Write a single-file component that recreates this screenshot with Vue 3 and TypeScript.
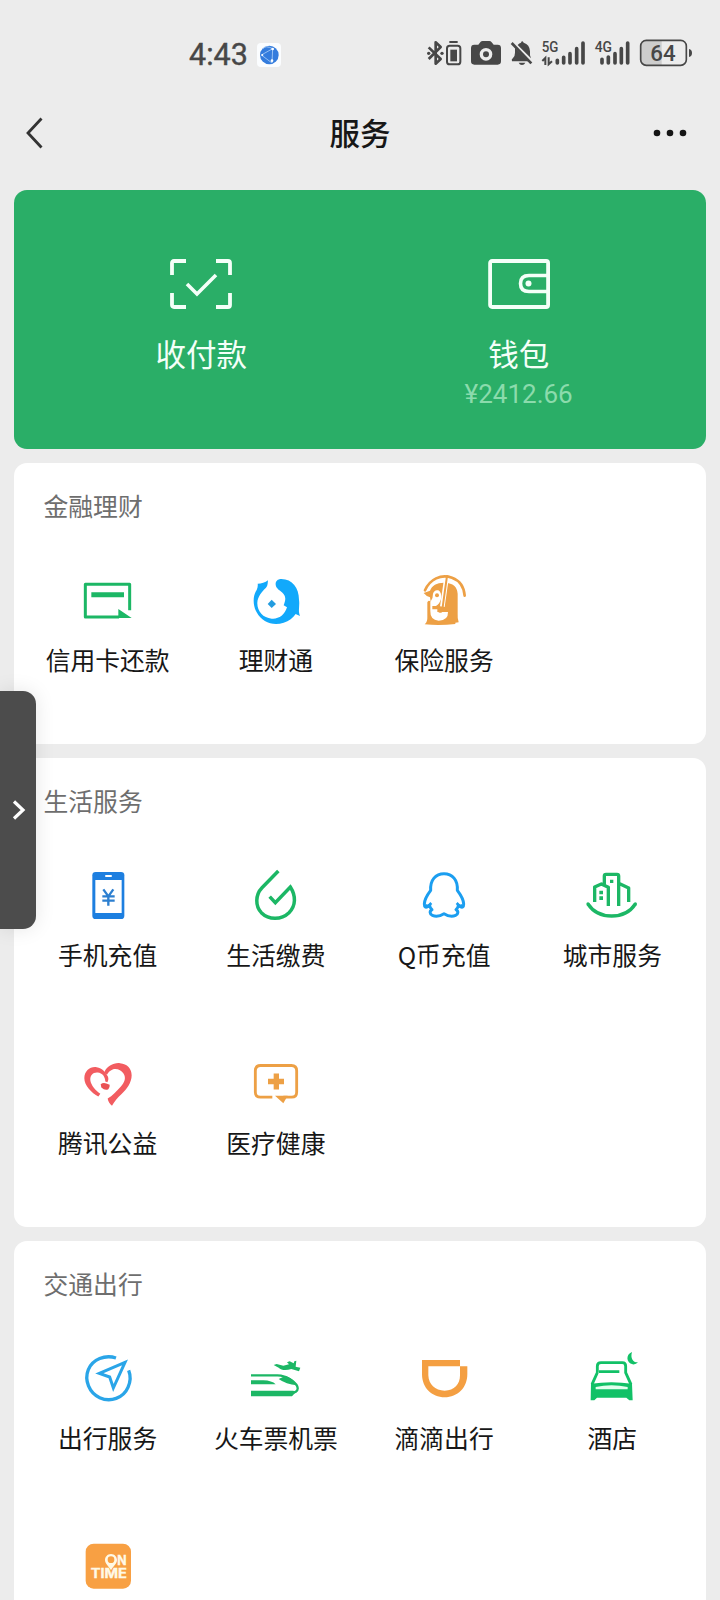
<script setup lang="ts">
interface Service {
  label: string
  viewBox: string
  art: string
}

interface Section {
  title: string
  items: Service[]
}

const green = '#1cb765'
const blue = '#1b9ef0'
const orange = '#eda045'

const sections: Section[] = [
  {
    title: '金融理财',
    items: [
      {
        label: '信用卡还款',
        viewBox: '38 48 150 150',
        art: `<path d="M178 151V73H45V171H146" fill="none" stroke="${green}" stroke-width="9" stroke-linejoin="round"/>
          <path d="M63 97H161V112H63ZM144 147L184 174H144Z" fill="${green}"/>`,
      },
      {
        label: '理财通',
        viewBox: '543 48 150 150',
        art: `<path d="M594 61C586 68 574 71 563 71C564 78 563 84 560 90C548 107 548 137 560 157C576 187 610 199 641 188C657 183 669 174 677 162L690 168C683 150 690 139 687 119C687 84 667 57 634 57C622 57 616 65 617 74C618 87 632 91 640 101C650 113 645 125 641 136L651 142C644 165 626 178 605 176C579 174 561 154 562 128C563 110 575 95 588 83C594 77 593 68 594 61Z" fill="#12a9fb"/>
          <path d="M605 119L618 132L605 144L593 132Z" fill="#239cdf"/>`,
      },
      {
        label: '保险服务',
        viewBox: '1047 48 150 150',
        art: `<path d="M1065 91C1079 58 1113 41 1146 53C1168 61 1182 80 1184 107" fill="none" stroke="${orange}" stroke-width="8" stroke-linecap="round"/>
          <path d="M1061 99L1080 92C1086 75 1102 67 1125 68Q1161 70 1163 101V160Q1162 177 1166 187L1156 188V192Q1110 197 1064 193Q1073 186 1072 170V127Q1075 119 1082 125L1080 112Q1070 110 1061 99Z" fill="${orange}"/>
          <path d="M1089 101Q1093 88 1105 91Q1116 97 1113 117Q1109 132 1098 138H1087V148H1102V156H1134Q1135 181 1106 182Q1080 180 1081 153V126Q1090 114 1089 101Z" fill="#fff"/>
          <circle cx="1101" cy="106" r="6" fill="${orange}"/>
          <path d="M1129 57L1117 140" fill="none" stroke="#fff" stroke-width="14"/>
          <path d="M1131 48L1117 149Q1115 158 1107 154" fill="none" stroke="${orange}" stroke-width="6" stroke-linecap="round"/>`,
      },
    ],
  },
  {
    title: '生活服务',
    items: [
      {
        label: '手机充值',
        viewBox: '38 33 150 150',
        art: `<rect x="66" y="36" width="96" height="141" rx="10" fill="#1d7fe0"/>
          <path d="M75 60H154V159H75Z" fill="#fff"/><path d="M107 48H122" stroke="#fff" stroke-width="6" stroke-linecap="round"/>
          <path d="M99 88L114 109L129 88M96 109H133M96 122H133M114 109V137" fill="none" stroke="#2c7fd0" stroke-width="7"/>`,
      },
      {
        label: '生活缴费',
        viewBox: '543 33 150 150',
        art: `<path d="M625 33L576 83C555 105 556 139 574 158C597 181 634 180 657 158C678 137 678 107 661 81L616 128L599 110" fill="none" stroke="${green}" stroke-width="10.5"/>`,
      },
      {
        label: 'Q币充值',
        viewBox: '57 33 150 150',
        art: `<path d="M92 91C90 60 107 41 132 41S174 60 172 91C181 103 191 120 191 132C191 142 187 144 180 139L175 136C175 141 173 145 168 149C176 153 175 163 167 166C155 171 143 168 132 161C121 168 109 171 97 166C89 163 88 153 96 149C91 145 89 141 89 136L84 139C77 144 73 142 73 132C73 120 83 103 92 91Z" fill="none" stroke="${blue}" stroke-width="9" stroke-linejoin="round"/>
          <path d="M94 129L84 139L76 136M170 129L180 139L188 136" fill="none" stroke="${blue}" stroke-width="8"/>`,
      },
      {
        label: '城市服务',
        viewBox: '562 33 150 150',
        art: `<path d="M565 132C596 180 676 180 707 132M585 126V81L605 72L626 82V138M614 75V48Q614 43 619 43H652Q657 43 657 48V138M660 71L687 84V126" fill="none" stroke="${green}" stroke-width="10" stroke-linejoin="round"/>
          <circle cx="565" cy="132" r="5" fill="${green}"/><circle cx="707" cy="132" r="5" fill="${green}"/>
          <path d="M631 59H641V69H631ZM599 92H610V103H599ZM599 109H610V120H599Z" fill="${green}"/>`,
      },
      {
        label: '腾讯公益',
        viewBox: '38 28.5 150 150',
        art: `<path d="M84 141C64 130 42 108 42 86C42 64 60 50 79 53C96 55 107 69 113 82C115 88 114 94 111 98L105 96C105 82 96 70 82 69C67 68 59 78 60 92C62 108 76 122 90 133Z" fill="#f25c60"/>
          <path d="M102 68C110 50 130 39 149 41C171 43 184 57 184 77C184 99 169 119 153 134C142 144 133 154 125 169C118 164 113 154 112 147C126 140 139 125 151 112C164 98 167 84 160 73C153 62 139 56 127 60C119 63 114 68 110 76Z" fill="#f25c60"/>
          <path d="M91 104Q99 98 108 102L118 106Q119 114 114 119Q104 124 93 114Z" fill="#e95254"/>`,
      },
      {
        label: '医疗健康',
        viewBox: '543 28.5 150 150',
        art: `<path d="M607 143H571Q556 143 556 128V64Q556 48 572 48H664Q680 48 680 64V128Q680 143 665 143H640" fill="none" stroke="${orange}" stroke-width="8.5"/>
          <path d="M611 72H627V88H642V104H627V120H611V104H594V88H611ZM615 139H653L640 161Z" fill="${orange}"/>`,
      },
    ],
  },
  {
    title: '交通出行',
    items: [
      {
        label: '出行服务',
        viewBox: '38 41 150 150',
        art: `<path d="M137 53C104 42 67 57 54 88C41 120 57 158 88 172C121 187 159 173 173 141C181 123 181 105 175 90" fill="none" stroke="#2aa5e8" stroke-width="10"/>
          <path d="M164 66L87 99L118 110L129 143Z" fill="none" stroke="#2aa5e8" stroke-width="9"/>`,
      },
      {
        label: '火车票机票',
        viewBox: '543 41 150 150',
        art: `<path d="M543 105H622C652 105 682 129 683 143C684 153 674 158 662 158H543" fill="none" stroke="${green}" stroke-width="7"/>
          <path d="M543 151H670L677 156L666 168H543ZM543 120H580Q606 121 617 132H543ZM626 116L647 106Q673 117 681 135Q648 132 626 116Z" fill="${green}"/>
          <path d="M611 74L620 71L640 76L657 72L651 66L659 63L671 69L673 63L679 61L677 79L691 82L687 93L664 86C648 91 634 90 626 82Z" fill="${green}"/>`,
      },
      {
        label: '滴滴出行',
        viewBox: '57 41 150 150',
        art: `<path d="M66 59H180V78H202V102C202 142 173 171 134 171S66 142 66 102ZM85 78V105C86 132 105 151 134 151S180 132 180 105V78Z" fill="#f49f42" fill-rule="evenodd"/>`,
      },
      {
        label: '酒店',
        viewBox: '562 41 150 150',
        art: `<path d="M593 97V78Q593 67 604 67H668Q678 67 678 78V97L694 132M593 97L577 132M598 94H659" fill="none" stroke="#12c167" stroke-width="8.5"/>
          <path d="M574 130Q635 121 697 130L699 180H689L680 172H592L584 180H573Z" fill="#12c167"/>
          <path d="M588 147V140Q635 130 684 140V147Z" fill="#e3ffee"/>
          <path d="M697 35C677 42 680 69 699 72Q709 73 715 66C701 67 691 55 697 35Z" fill="#12c167"/>`,
      },
      {
        label: '',
        viewBox: '248 68 150 150',
        art: `<rect x="256" y="70" width="136" height="135" rx="24" fill="#f8a043"/>
          <g fill="#fff9e6" stroke="#fff9e6" stroke-width="1" font-family="Inter, 'Open Sans', sans-serif" font-weight="700" font-size="39">
          <text x="351" y="134" textLength="28" lengthAdjust="spacingAndGlyphs">N</text><text x="271" y="174" textLength="109" lengthAdjust="spacingAndGlyphs">TIME</text></g>
          <path d="M332 101C321 101 314 110 314 119C314 131 327 139 332 150C337 139 350 131 350 119C350 110 343 101 332 101ZM332 108A10 10 0 1 1 332 128A10 10 0 1 1 332 108Z" fill="#fff9e6" fill-rule="evenodd"/>`,
      },
    ],
  },
]
</script>

<template>
  <div class="screen">
    <header class="status">
      <span class="time">4:43</span>
      <svg class="app-badge" viewBox="0 0 72 72">
        <rect width="72" height="72" rx="12" fill="#fbfdff" />
        <circle cx="37" cy="36" r="28" fill="#347cdd" />
        <path d="M13 36L47 17L45 60ZM47 17Q25 6 18 17" fill="none" stroke="#a9cef8" stroke-width="2.5" />
        <circle cx="47" cy="18" r="4" fill="#fff" /><circle cx="45" cy="53" r="4" fill="#fff" /><circle cx="16" cy="36" r="3" fill="#fff" />
      </svg>
      <svg class="indicators" viewBox="0 0 870 150">
        <g fill="none" stroke="#474747" stroke-width="8">
          <path d="M41 52L77 87L62 101V37L77 51L41 87" stroke-linejoin="round" />
          <rect x="96" y="47" width="40" height="56" rx="8" stroke-width="6" />
          <path d="M103 36H128" stroke-width="6" />
        </g>
        <g fill="#474747">
          <circle cx="41" cy="70" r="5" /><circle cx="81" cy="70" r="5" />
          <path d="M106 59H126V94H106Z" />
          <path d="M178 44H190L197 35Q199 33 203 33H223Q227 33 230 37L236 44H248Q258 44 258 54V94Q258 104 248 104H178Q168 104 168 94V54Q168 44 178 44ZM213 54A19 19 0 1 0 213 92A19 19 0 1 0 213 54Z" fill-rule="evenodd" />
          <circle cx="213" cy="73" r="9" />
          <path d="M300 53L340 94H291Q288 88 294 84Q300 78 300 68ZM308 45Q313 39 318 38Q321 30 326 38Q344 43 345 64V76L348 85ZM311 98H331Q328 105 321 105T311 98Z" />
          <path d="M822 57Q831 59 831 69T822 81Z" />
        </g>
        <path d="M290 39L349 100" stroke="#474747" stroke-width="8" />
        <g stroke="#474747" stroke-width="11" stroke-linecap="round">
          <path d="M427 91V99M446 82V99M465 71V99M485 56V99M504 39V99" />
          <path d="M561 88V99M580 81V99M600 71V99M619 56V99M638 39V99" />
        </g>
        <path d="M382 93L391 84V105M401 82V103L411 94" fill="none" stroke="#474747" stroke-width="6" />
        <path d="M691 31H740V107H691Q677 107 677 91V47Q677 31 691 31Z" fill="#cdcdcd" />
        <rect x="677" y="31" width="137" height="75" rx="17" fill="none" stroke="#474747" stroke-width="5" />
        <g class="indicator-text">
          <text x="380" y="67" font-size="45" textLength="50" lengthAdjust="spacingAndGlyphs">5G</text>
          <text x="539" y="67" font-size="45" textLength="52" lengthAdjust="spacingAndGlyphs">4G</text>
          <text x="706" y="93" font-size="66" textLength="76" lengthAdjust="spacingAndGlyphs">64</text>
        </g>
      </svg>
    </header>

    <nav class="navbar">
      <svg class="back" viewBox="0 0 18 34"><path d="M16.5 2.5L3 17L16.5 31.5" fill="none" stroke="#333" stroke-width="2.8" /></svg>
      <h1>服务</h1>
      <svg class="more" viewBox="0 0 34 8"><g fill="#151515"><circle cx="4" cy="4" r="3.3" /><circle cx="17" cy="4" r="3.3" /><circle cx="30" cy="4" r="3.3" /></g></svg>
    </nav>

    <main class="content">
      <section class="hero">
        <div class="hero-item">
          <svg viewBox="0 0 64 52">
            <path d="M3 17V5Q3 3 5 3H17M47 3H59Q61 3 61 5V17M61 35V47Q61 49 59 49H47M17 49H5Q3 49 3 47V35" fill="none" stroke="#f4fff8" stroke-width="3.8" />
            <path d="M18 26L28 36L47 17" fill="none" stroke="#f4fff8" stroke-width="3.6" />
          </svg>
          <span class="hero-label">收付款</span>
        </div>
        <div class="hero-item">
          <svg viewBox="0 0 64 52">
            <rect x="3.1" y="3" width="58" height="46" rx="2" fill="none" stroke="#f4fff8" stroke-width="3.8" />
            <path d="M61 17.5H42Q33.5 17.5 33.5 25.5T42 33.5H61" fill="none" stroke="#f4fff8" stroke-width="3.6" />
            <circle cx="41.5" cy="25.5" r="3" fill="#f4fff8" />
          </svg>
          <span class="hero-label">钱包</span>
          <span class="balance">¥2412.66</span>
        </div>
      </section>

      <section v-for="section in sections" :key="section.title" class="card">
        <h2>{{ section.title }}</h2>
        <div class="grid">
          <div v-for="item in section.items" :key="item.label" class="service">
            <svg :viewBox="item.viewBox"><g v-html="item.art"></g></svg>
            <span>{{ item.label }}</span>
          </div>
        </div>
      </section>
    </main>

    <aside class="drawer">
      <svg viewBox="0 0 14 22"><path d="M2 2.5L11 11L2 19.5" fill="none" stroke="#fff" stroke-width="3.2" /></svg>
    </aside>
  </div>
</template>

<style>
body {
  margin: 0;
  background: #ececec;
}
</style>

<style scoped>
.screen {
  position: relative;
  box-sizing: border-box;
  width: 720px;
  height: 1600px;
  overflow: hidden;
  background: #ececec;
  color: #171717;
  font-family: 'Noto Sans CJK SC', 'Noto Sans', sans-serif;
}

.screen svg {
  display: block;
  flex: none;
  overflow: visible;
}

.status {
  display: flex;
  align-items: center;
  box-sizing: border-box;
  height: 100px;
  padding: 9px 15px 0 189px;
}

.time {
  width: 68px;
  color: #474747;
  font: 400 30.5px/36px Roboto, sans-serif;
  -webkit-text-stroke: 0.4px #474747;
}

.app-badge {
  width: 24px;
  height: 24px;
}

.indicators {
  width: 290px;
  height: 50px;
  margin-left: auto;
}

.indicator-text {
  fill: #474747;
  font-family: Roboto, sans-serif;
  font-weight: 500;
}

.navbar {
  display: grid;
  grid-template-columns: 1fr auto 1fr;
  align-items: center;
  height: 66px;
  padding: 0 33px 0 25px;
}

.back {
  width: 18px;
  height: 34px;
}

.navbar h1 {
  margin: 0 0 2px 8px;
  font-size: 30.5px;
  font-weight: 500;
  line-height: 44px;
}

.more {
  width: 34px;
  height: 8px;
  justify-self: end;
}

.content {
  display: flex;
  flex-direction: column;
  gap: 14px;
  padding: 24px 14px 0;
}

.hero {
  display: grid;
  grid-template-columns: 1fr 1fr;
  box-sizing: border-box;
  height: 259px;
  padding: 68px 28.7px 0;
  border-radius: 13px;
  background: #2aae67;
}

.hero-item {
  display: flex;
  flex-direction: column;
  align-items: center;
}

.hero-item svg {
  width: 64px;
  height: 52px;
}

.hero-label {
  margin-top: 21px;
  color: #f4fff8;
  font-size: 30.5px;
  line-height: 44px;
}

.balance {
  margin-top: 2px;
  color: #8bdbac;
  font: 400 26px/34px Roboto, sans-serif;
}

.card {
  flex: none;
  border-radius: 13px;
  background: #fff;
}

.card h2 {
  height: 92px;
  margin: 0 0 0 29.5px;
  color: #6e6e6e;
  font-size: 24.8px;
  font-weight: 400;
  line-height: 85px;
}

.grid {
  display: grid;
  grid-template-columns: repeat(4, 1fr);
  grid-auto-rows: 188.7px;
  padding: 0 9.5px;
}

.service {
  display: flex;
  flex-direction: column;
  align-items: center;
  padding-top: 21px;
}

.service svg {
  width: 50px;
  height: 50px;
}

.service span {
  margin-top: 15px;
  font-size: 24.8px;
  line-height: 36px;
  white-space: nowrap;
}

.drawer {
  position: absolute;
  top: 691px;
  left: 0;
  display: flex;
  align-items: center;
  box-sizing: border-box;
  width: 36px;
  height: 238px;
  padding-left: 12px;
  border-radius: 0 13px 13px 0;
  background: #4c4c4c;
  box-shadow: 0 0 20px rgba(0, 0, 0, 0.1);
}

.drawer svg {
  width: 14px;
  height: 22px;
}
</style>
